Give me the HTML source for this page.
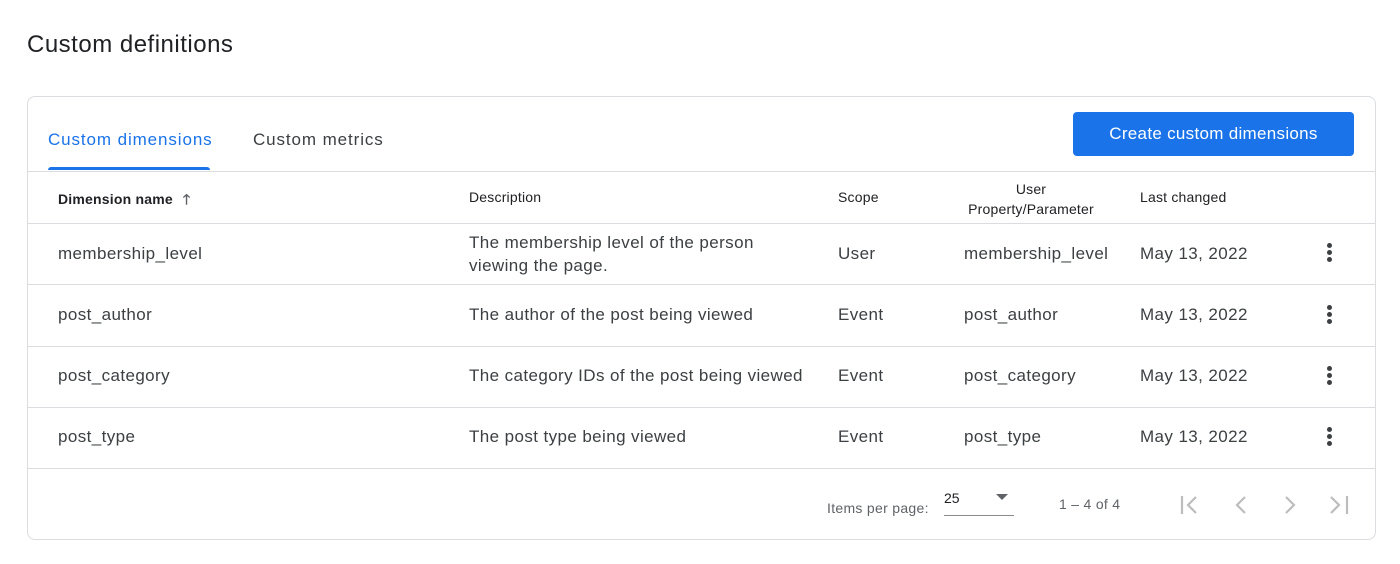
<!DOCTYPE html><html><head><style>
body{margin:0;width:1400px;height:564px;background:#fff;font-family:"Liberation Sans",Arial,sans-serif;color:#202124;position:relative;overflow:hidden}
.a{position:absolute;white-space:nowrap}
.card{position:absolute;left:27px;top:96px;width:1347px;height:442px;border:1px solid #dadce0;border-radius:8px}
.hl{position:absolute;left:28px;width:1347px;height:1px;background:#dadce0}
.c{font-size:17px;color:#3c4043;letter-spacing:0.4px}
.h{font-size:14px;font-weight:bold;color:#202124;letter-spacing:0.2px}
.dots{position:absolute;width:5px}
.dots i{display:block;width:5px;height:5px;border-radius:50%;background:#3c4043;margin-bottom:2px}
</style></head><body>
<div class="a" style="left:27px;top:31px;font-size:24px;color:#202124;letter-spacing:0.5px">Custom definitions</div>
<div class="card"></div>
<div class="a" style="left:48px;top:130px;font-size:17px;color:#1a73e8;letter-spacing:0.9px">Custom dimensions</div>
<div style="position:absolute;left:48px;top:167px;width:162px;height:3px;background:#1a73e8;border-radius:3px 3px 0 0"></div>
<div class="a" style="left:253px;top:130px;font-size:17px;color:#3c4043;letter-spacing:0.9px">Custom metrics</div>
<div class="a" style="left:1073px;top:112px;width:281px;height:44px;background:#1a73e8;border-radius:4px;color:#fff;font-size:17px;line-height:44px;text-align:center;letter-spacing:0.3px">Create custom dimensions</div>
<div class="hl" style="top:171px"></div>
<div class="a h" style="left:58px;top:189px">Dimension name <span style="color:#5f6368;margin-left:6px">🡑</span></div>
<div class="a h" style="left:469px;top:189px;font-weight:normal">Description</div>
<div class="a h" style="left:838px;top:189px;font-weight:normal">Scope</div>
<div class="a h" style="left:960px;top:179px;width:142px;font-weight:normal;text-align:center;line-height:20px">User<br>Property/Parameter</div>
<div class="a h" style="left:1140px;top:189px;font-weight:normal">Last changed</div>
<div class="hl" style="top:223px"></div>
<div class="a c" style="left:58px;top:244px">membership_level</div>
<div class="a c" style="left:469px;top:231px;line-height:23px">The membership level of the person<br>viewing the page.</div>
<div class="a c" style="left:838px;top:244px">User</div>
<div class="a c" style="left:964px;top:244px">membership_level</div>
<div class="a c" style="left:1140px;top:244px">May 13, 2022</div>
<div class="dots" style="left:1327px;top:243px"><i></i><i></i><i></i></div>
<div class="hl" style="top:284px"></div>
<div class="a c" style="left:58px;top:305px">post_author</div>
<div class="a c" style="left:469px;top:305px">The author of the post being viewed</div>
<div class="a c" style="left:838px;top:305px">Event</div>
<div class="a c" style="left:964px;top:305px">post_author</div>
<div class="a c" style="left:1140px;top:305px">May 13, 2022</div>
<div class="dots" style="left:1327px;top:305px"><i></i><i></i><i></i></div>
<div class="hl" style="top:346px"></div>
<div class="a c" style="left:58px;top:366px">post_category</div>
<div class="a c" style="left:469px;top:366px">The category IDs of the post being viewed</div>
<div class="a c" style="left:838px;top:366px">Event</div>
<div class="a c" style="left:964px;top:366px">post_category</div>
<div class="a c" style="left:1140px;top:366px">May 13, 2022</div>
<div class="dots" style="left:1327px;top:366px"><i></i><i></i><i></i></div>
<div class="hl" style="top:407px"></div>
<div class="a c" style="left:58px;top:427px">post_type</div>
<div class="a c" style="left:469px;top:427px">The post type being viewed</div>
<div class="a c" style="left:838px;top:427px">Event</div>
<div class="a c" style="left:964px;top:427px">post_type</div>
<div class="a c" style="left:1140px;top:427px">May 13, 2022</div>
<div class="dots" style="left:1327px;top:427px"><i></i><i></i><i></i></div>
<div class="hl" style="top:468px"></div>
<div class="a" style="left:827px;top:500px;font-size:14px;color:#5f6368;letter-spacing:0.3px">Items per page:</div>
<div class="a" style="left:944px;top:490px;font-size:14px;color:#202124">25</div>
<div style="position:absolute;left:996px;top:494px;width:0;height:0;border-left:6px solid transparent;border-right:6px solid transparent;border-top:6px solid #5f6368"></div>
<div style="position:absolute;left:944px;top:515px;width:70px;height:1px;background:#8a8a8a"></div>
<div class="a" style="left:1059px;top:496px;font-size:14px;color:#5f6368;letter-spacing:0.3px">1 – 4 of 4</div>
<svg style="position:absolute;left:1176px;top:490px" width="180" height="30" fill="none" stroke="#bdbdbd" stroke-width="2.2">
<path d="M6 6v18M20 7l-8 8 8 8"/>
<path d="M69 7l-8 8 8 8"/>
<path d="M110 7l8 8-8 8"/>
<path d="M155 7l8 8-8 8M171 6v18"/>
</svg>
</body></html>
